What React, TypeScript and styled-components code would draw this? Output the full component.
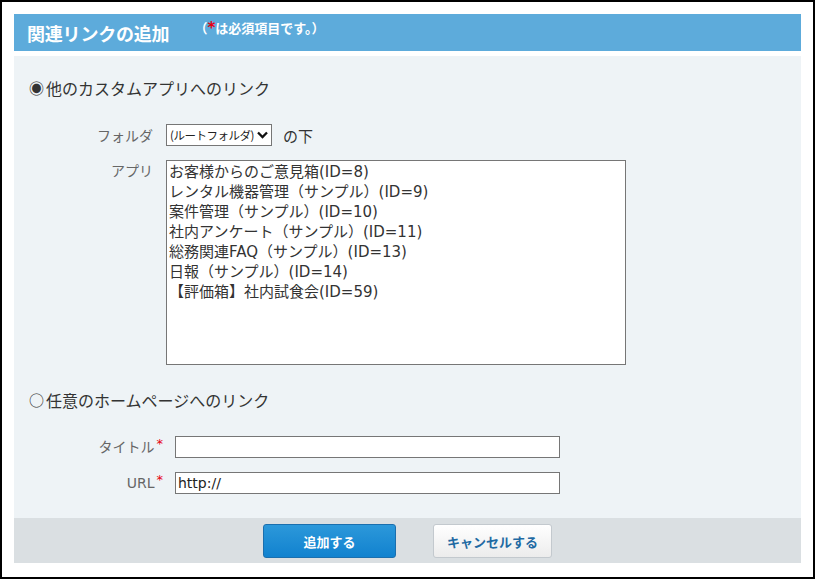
import React from "react";
import styled, { createGlobalStyle } from "styled-components";

const GlobalStyle = createGlobalStyle`
  html, body {
    margin: 0;
    padding: 0;
    background: #fff;
  }
  body {
    font-family: "Noto Sans CJK JP", "Noto Sans", sans-serif;
    color: #333;
  }
`;

const latin = `"DejaVu Sans", "Noto Sans CJK JP", sans-serif`;

const Frame = styled.div`
  box-sizing: border-box;
  width: 815px;
  height: 579px;
  border: 2px solid #000;
  padding: 12px;
  background: #fff;
`;

const Header = styled.div`
  display: flex;
  align-items: center;
  height: 37px;
  padding-left: 13px;
  margin-bottom: 5px;
  background: #5dabdb;
  color: #fff;
`;

const Title = styled.h1`
  margin: 0;
  font-size: 18px;
  font-weight: bold;
  line-height: 1;
  letter-spacing: -0.2px;
`;

const Note = styled.span`
  align-self: flex-start;
  margin: 6px 0 0 25px;
  font-size: 13px;
  font-weight: bold;
  line-height: 16px;
`;

const Required = styled.span`
  font-family: ${latin};
  font-size: 15px;
  color: #e60012;
`;

const Panel = styled.div`
  box-sizing: border-box;
  height: 462px;
  padding-top: 22px;
  background: #eef3f6;
`;

const RadioRow = styled.label<{ $gap?: number }>`
  display: flex;
  align-items: center;
  margin-top: ${(p) => p.$gap ?? 0}px;
  padding-left: 15px;
  font-size: 16px;
  line-height: 20px;
  color: #333;
`;

const RadioMark = styled.span`
  display: inline-block;
  width: 17px;
  font-size: 15px;
  color: #333;
`;

const Fields = styled.div<{ $label: number; $gap: number; $top: number }>`
  display: grid;
  grid-template-columns: ${(p) => p.$label}px auto;
  column-gap: ${(p) => p.$gap}px;
  row-gap: 14px;
  margin-top: ${(p) => p.$top}px;
  justify-items: start;
`;

const Label = styled.div<{ $top?: boolean }>`
  justify-self: end;
  align-self: ${(p) => (p.$top ? "start" : "center")};
  font-size: 14px;
  line-height: 20px;
  color: #666;
`;

const LatinText = styled.span`
  font-family: ${latin};
`;

const Star = styled.span`
  position: relative;
  top: -4px;
  margin-left: 2px;
  font-family: ${latin};
  font-size: 13px;
  color: #e60012;
`;

const Inline = styled.div`
  display: flex;
  align-items: center;
  gap: 11px;
`;

const Select = styled.div`
  box-sizing: border-box;
  display: flex;
  align-items: center;
  justify-content: space-between;
  gap: 2px;
  width: 106px;
  height: 22px;
  padding: 0 3px 0 3px;
  border: 1px solid #767676;
  background: #fff;
  font-size: 11.5px;
  letter-spacing: -0.5px;
  white-space: nowrap;
  color: #222;
`;

const Suffix = styled.span`
  font-size: 15px;
  color: #333;
`;

const ListBox = styled.ul`
  box-sizing: border-box;
  width: 460px;
  height: 205px;
  margin: 0;
  padding: 1px 2px;
  list-style: none;
  border: 1px solid #767676;
  background: #fff;
  font-family: ${latin};
`;

const Option = styled.li`
  font-size: 15px;
  line-height: 20px;
  color: #333;
  white-space: nowrap;
`;

const TextInput = styled.div`
  box-sizing: border-box;
  width: 385px;
  height: 22px;
  padding: 0 2px;
  border: 1px solid #767676;
  background: #fff;
  font-family: ${latin};
  font-size: 14px;
  line-height: 20px;
  color: #222;
`;

const Footer = styled.div`
  display: flex;
  justify-content: center;
  align-items: center;
  gap: 37px;
  height: 45px;
  padding-top: 1px;
  box-sizing: border-box;
  background: #dadfe2;
`;

const Button = styled.button<{ $primary?: boolean }>`
  box-sizing: border-box;
  width: ${(p) => (p.$primary ? 133 : 119)}px;
  height: 34px;
  border-radius: 3px;
  border: 1px solid ${(p) => (p.$primary ? "#1b6fae" : "#c3c9ce")};
  background: ${(p) =>
    p.$primary
      ? "linear-gradient(#2c98da, #1182cf)"
      : "linear-gradient(#ffffff, #ececec)"};
  color: ${(p) => (p.$primary ? "#fff" : "#1f6aa3")};
  font-family: "Noto Sans CJK JP", sans-serif;
  font-size: 13px;
  font-weight: bold;
  cursor: pointer;
`;

const Chevron = () => (
  <svg width="11" height="10" viewBox="0 0 11 10" style={{ flexShrink: 0 }}>
    <path d="M1 2.5 L5.5 7 L10 2.5" fill="none" stroke="#111" strokeWidth="2.3" />
  </svg>
);

const apps = [
  "お客様からのご意見箱(ID=8)",
  "レンタル機器管理（サンプル）(ID=9)",
  "案件管理（サンプル）(ID=10)",
  "社内アンケート（サンプル）(ID=11)",
  "総務関連FAQ（サンプル）(ID=13)",
  "日報（サンプル）(ID=14)",
  "【評価箱】社内試食会(ID=59)",
];

export default function App() {
  return (
    <>
      <GlobalStyle />
      <Frame>
        <Header>
          <Title>関連リンクの追加</Title>
          <Note>
            （<Required>*</Required>は必須項目です。）
          </Note>
        </Header>
        <Panel>
          <RadioRow>
            <RadioMark>◉</RadioMark>他のカスタムアプリへのリンク
          </RadioRow>
          <Fields $label={139} $gap={13} $top={26}>
            <Label>フォルダ</Label>
            <Inline>
              <Select>
                <span>(ルートフォルダ)</span>
                <Chevron />
              </Select>
              <Suffix>の下</Suffix>
            </Inline>
            <Label $top>アプリ</Label>
            <ListBox>
              {apps.map((a) => (
                <Option key={a}>{a}</Option>
              ))}
            </ListBox>
          </Fields>
          <RadioRow $gap={25}>
            <RadioMark>○</RadioMark>任意のホームページへのリンク
          </RadioRow>
          <Fields $label={149} $gap={12} $top={26}>
            <Label>
              タイトル<Star>*</Star>
            </Label>
            <TextInput />
            <Label>
              <LatinText>URL</LatinText>
              <Star>*</Star>
            </Label>
            <TextInput>http://</TextInput>
          </Fields>
        </Panel>
        <Footer>
          <Button $primary>追加する</Button>
          <Button>キャンセルする</Button>
        </Footer>
      </Frame>
    </>
  );
}
